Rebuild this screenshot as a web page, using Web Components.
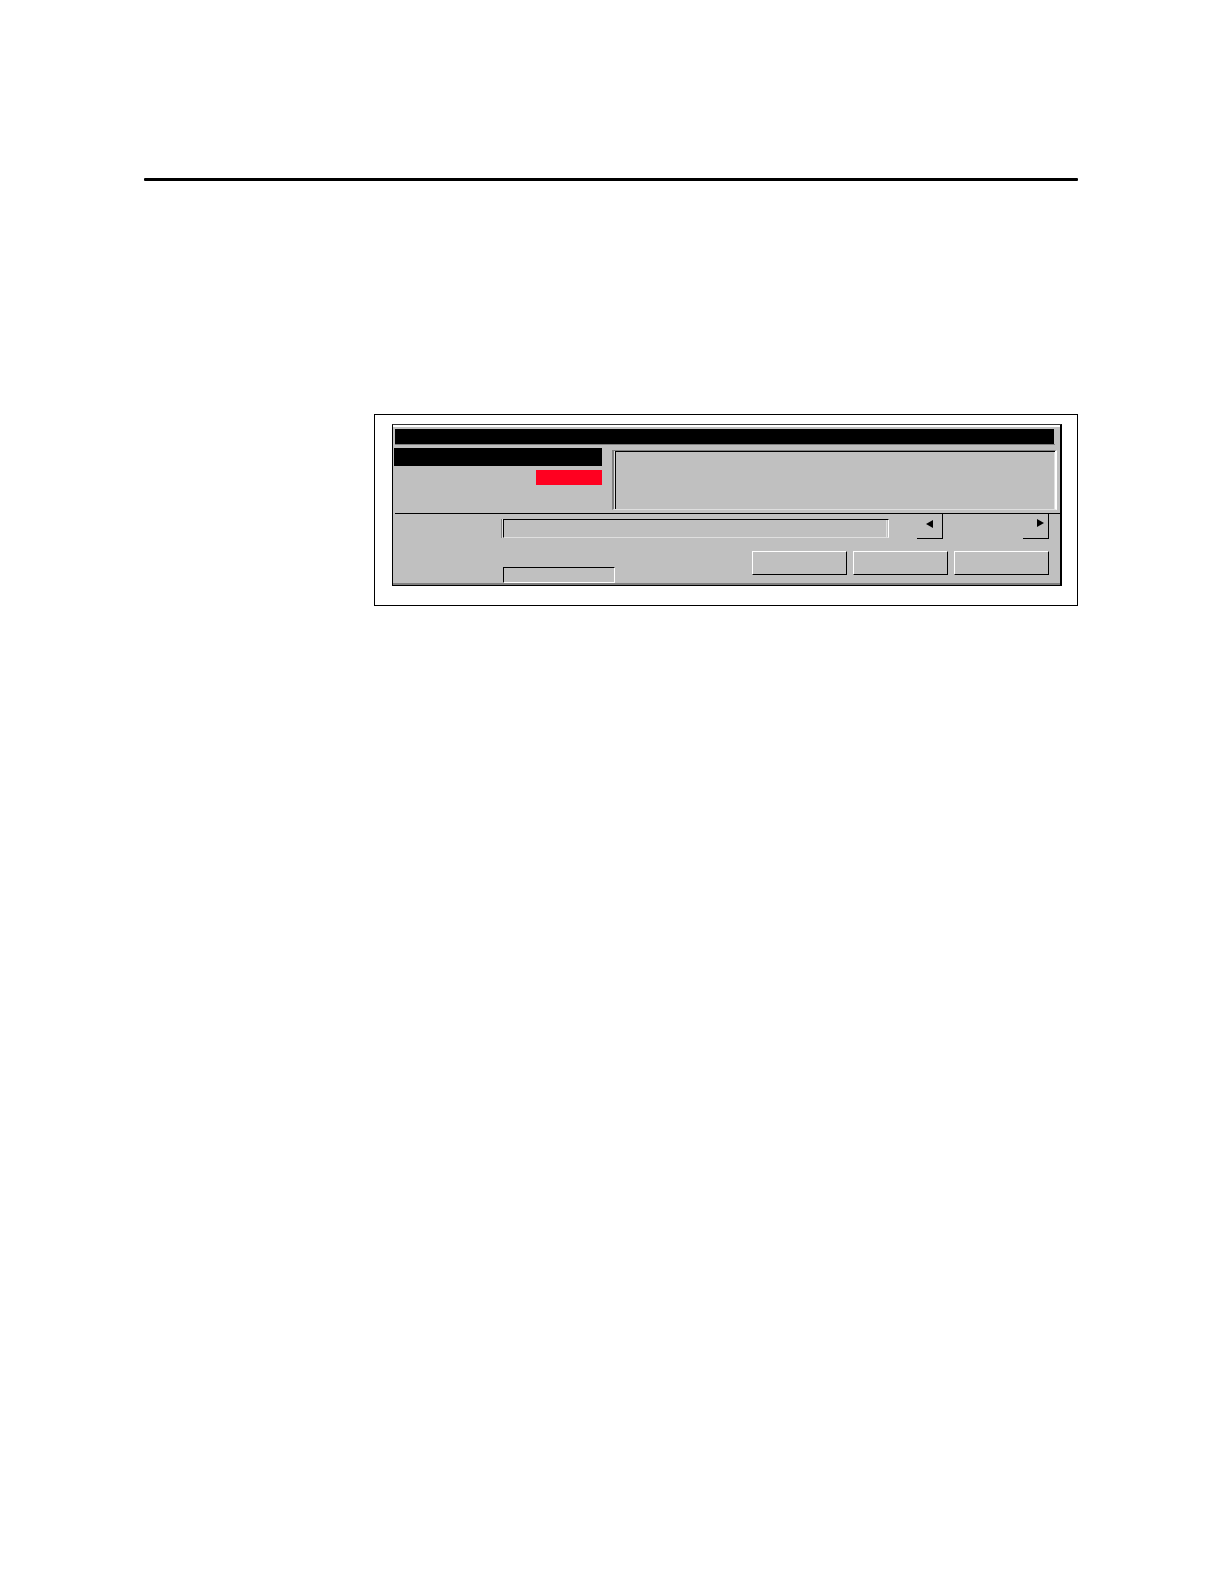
<!DOCTYPE html>
<html lang="en">
<head>
<meta charset="utf-8">
<meta name="viewport" content="width=device-width, initial-scale=1">
<title>Message window</title>
<style>
    body {
        margin: 0;
        background: #fff;
        font-family: "Liberation Sans", Arial, sans-serif;
        font-size: 12px;
    }
</style>
</head>
<body>
<manual-page>
    <figure-frame>
        <message-window></message-window>
    </figure-frame>
</manual-page>

<script>
class ManualPage extends HTMLElement {
    constructor() {
        super();
        this.attachShadow({ mode: 'open' });
        this.shadowRoot.innerHTML = `
            <style>
                :host {
                    display: block;
                    padding: 178px 146px 100px 144px;
                }

                hr {
                    height: 3px;
                    margin: 0 0 233px;
                    border: 0;
                    border-radius: 1px;
                    background: #000;
                }

                main {
                    padding-left: 230px;
                }
            </style>
            <hr>
            <main><slot></slot></main>
        `;
    }
}

class FigureFrame extends HTMLElement {
    constructor() {
        super();
        this.attachShadow({ mode: 'open' });
        this.shadowRoot.innerHTML = `
            <style>
                :host {
                    display: block;
                    border: 1px solid #000;
                    padding: 9px 15px 19px 17px;
                }
            </style>
            <slot></slot>
        `;
    }
}

// Sunken text box; the "double" attribute adds the outer bevel
class SunkenField extends HTMLElement {
    constructor() {
        super();
        this.attachShadow({ mode: 'open' });
        this.shadowRoot.innerHTML = `
            <style>
                :host {
                    display: flex;
                    height: 16px;
                }

                :host([double]) {
                    height: 19px;
                    box-sizing: border-box;
                    border-left: 1px solid #808080;
                    box-shadow: inset 1px 0 #dfdfdf;
                    padding-left: 1px;
                }

                input {
                    box-sizing: border-box;
                    width: 100%;
                    min-width: 0;
                    margin: 0;
                    padding: 0 2px;
                    border: 1px solid;
                    border-color: #000 #fff #fff #000;
                    border-radius: 0;
                    background: #c0c0c0;
                    font: inherit;
                    outline: none;
                }

                :host([double]) input {
                    border-bottom-color: #dfdfdf;
                    box-shadow: inset -1px 0 #c0c0c0, inset -2px 0 #dfdfdf;
                }
            </style>
            <input type="text" aria-label="${this.getAttribute('label') || ''}">
        `;
    }
}

class PushButton extends HTMLElement {
    constructor() {
        super();
        this.attachShadow({ mode: 'open' });
        this.shadowRoot.innerHTML = `
            <style>
                :host {
                    display: block;
                    width: 95px;
                    height: 24px;
                }

                button {
                    display: block;
                    box-sizing: border-box;
                    width: 100%;
                    height: 100%;
                    padding: 0;
                    border: 1px solid;
                    border-color: #fff #000 #000 #fff;
                    border-radius: 0;
                    background: #c0c0c0;
                    font: inherit;
                }
            </style>
            <button type="button" aria-label="${this.getAttribute('label') || ''}"></button>
        `;
    }
}

class ArrowButton extends HTMLElement {
    constructor() {
        super();
        this.attachShadow({ mode: 'open' });
        const next = this.getAttribute('direction') === 'next';
        const points = next ? '14,5 21,9 14,13' : '16,6 16,14 9,10';
        this.shadowRoot.innerHTML = `
            <style>
                :host {
                    display: block;
                    width: 26px;
                    height: 25px;
                }

                button {
                    display: block;
                    box-sizing: border-box;
                    width: 100%;
                    height: 100%;
                    padding: 0;
                    border: 0 solid #000;
                    border-width: 0 1px 1px 0;
                    border-radius: 0;
                    background: #c0c0c0;
                }

                svg {
                    display: block;
                }
            </style>
            <button type="button" aria-label="${next ? 'Next' : 'Previous'}">
                <svg width="25" height="24" viewBox="0 0 25 24" aria-hidden="true">
                    <polygon points="${points}" fill="#000"/>
                </svg>
            </button>
        `;
    }
}

class MessageWindow extends HTMLElement {
    constructor() {
        super();
        this.attachShadow({ mode: 'open' });
        this.shadowRoot.innerHTML = `
            <style>
                :host {
                    display: block;
                    border: solid #000;
                    border-width: 1px 2px 1px 1px;
                    border-top-color: #333;
                    background: #c0c0c0;
                    box-shadow: inset 0 2px #fff, inset 0 -2px #808080;
                    padding-top: 4px;
                }

                .title {
                    height: 15px;
                    margin: 0 5px 0 2px;
                    border-bottom: 1px solid #808080;
                    background: linear-gradient(#000, #000) no-repeat 0 0 / calc(100% - 1px) 15px;
                }

                .upper {
                    display: flex;
                    gap: 10px;
                    padding: 3px 3px 3px 1px;
                }

                .status {
                    display: flex;
                    flex-direction: column;
                    gap: 4px;
                    width: 208px;
                }

                .selected {
                    height: 18px;
                    background: #000;
                }

                .alarm {
                    align-self: flex-end;
                    width: 66px;
                    height: 15px;
                    background: #ff0020;
                }

                .messages {
                    flex: 1;
                    height: 58px;
                    margin-top: 2px;
                    border: solid;
                    border-width: 1px 2px 1px 2px;
                    border-color: #808080 #fff #dfdfdf #808080;
                    box-shadow: inset 1px 0 #dfdfdf;
                    padding-left: 1px;
                }

                .messages div {
                    height: 100%;
                    box-shadow: inset 1px 1px #000, inset -1px 0 #dfdfdf;
                }

                .lower {
                    margin-left: 2px;
                    border-top: 1px solid #000;
                    padding: 0 11px 2px 0;
                }

                .row {
                    display: flex;
                    align-items: flex-start;
                }

                .entry {
                    flex: 1;
                    margin: 5px 28px 0 106px;
                }

                .arrows {
                    display: flex;
                    gap: 80px;
                }

                .actions {
                    justify-content: space-between;
                    padding: 12px 0 0 108px;
                }

                .code {
                    width: 112px;
                    margin-top: 16px;
                }

                .buttons {
                    display: flex;
                    gap: 6px;
                }
            </style>
            <div class="title"></div>
            <div class="upper">
                <div class="status">
                    <div class="selected"></div>
                    <div class="alarm"></div>
                </div>
                <div class="messages"><div></div></div>
            </div>
            <div class="lower">
                <div class="row">
                    <sunken-field class="entry" double label="Entry"></sunken-field>
                    <div class="arrows">
                        <arrow-button direction="previous"></arrow-button>
                        <arrow-button direction="next"></arrow-button>
                    </div>
                </div>
                <div class="row actions">
                    <sunken-field class="code" label="Code"></sunken-field>
                    <div class="buttons">
                        <push-button label="First action"></push-button>
                        <push-button label="Second action"></push-button>
                        <push-button label="Third action"></push-button>
                    </div>
                </div>
            </div>
        `;
    }
}

customElements.define('sunken-field', SunkenField);
customElements.define('push-button', PushButton);
customElements.define('arrow-button', ArrowButton);
customElements.define('message-window', MessageWindow);
customElements.define('figure-frame', FigureFrame);
customElements.define('manual-page', ManualPage);
</script>
</body>
</html>
